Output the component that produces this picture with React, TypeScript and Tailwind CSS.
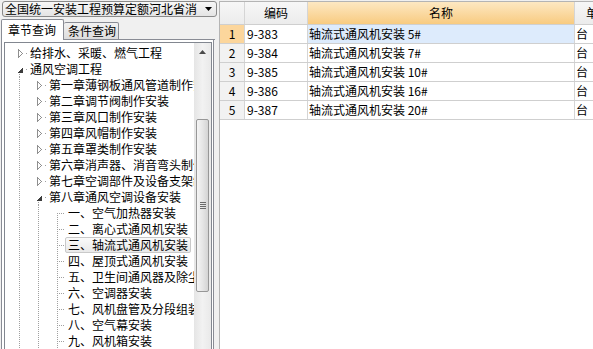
import React from "react";

type Node = { l: number; t: string; k: "c" | "e" | "leaf"; first?: boolean; hl?: boolean };

const tree: Node[] = [
  { l: 0, t: "给排水、采暖、燃气工程", k: "c" },
  { l: 0, t: "通风空调工程", k: "e" },
  { l: 1, t: "第一章薄钢板通风管道制作安装", k: "c" },
  { l: 1, t: "第二章调节阀制作安装", k: "c" },
  { l: 1, t: "第三章风口制作安装", k: "c" },
  { l: 1, t: "第四章风帽制作安装", k: "c" },
  { l: 1, t: "第五章罩类制作安装", k: "c" },
  { l: 1, t: "第六章消声器、消音弯头制作安装", k: "c" },
  { l: 1, t: "第七章空调部件及设备支架制作安装", k: "c" },
  { l: 1, t: "第八章通风空调设备安装", k: "e" },
  { l: 2, t: "一、空气加热器安装", k: "leaf", first: true },
  { l: 2, t: "二、离心式通风机安装", k: "leaf" },
  { l: 2, t: "三、轴流式通风机安装", k: "leaf", hl: true },
  { l: 2, t: "四、屋顶式通风机安装", k: "leaf" },
  { l: 2, t: "五、卫生间通风器及除尘器安装", k: "leaf" },
  { l: 2, t: "六、空调器安装", k: "leaf" },
  { l: 2, t: "七、风机盘管及分段组装式空调器安装", k: "leaf" },
  { l: 2, t: "八、空气幕安装", k: "leaf" },
  { l: 2, t: "九、风机箱安装", k: "leaf" },
];

const rows = [
  { n: "1", code: "9-383", name: "轴流式通风机安装 5#", unit: "台", sel: true },
  { n: "2", code: "9-384", name: "轴流式通风机安装 7#", unit: "台" },
  { n: "3", code: "9-385", name: "轴流式通风机安装 10#", unit: "台" },
  { n: "4", code: "9-386", name: "轴流式通风机安装 16#", unit: "台" },
  { n: "5", code: "9-387", name: "轴流式通风机安装 20#", unit: "台" },
];

const DOT = "#a0a0a0";

function Gutter({ node, idx }: { node: Node; idx: number }) {
  const L = node.l;
  const w = 22 + 19 * L;
  const lines: React.ReactNode[] = [];
  // ancestor column lines
  if (L >= 1 && idx >= 2) {
    lines.push(<line key="a0" x1={14.5} y1={0} x2={14.5} y2={16} stroke={DOT} strokeDasharray="1 1" />);
  }
  if (L >= 2 && idx >= 10) {
    lines.push(<line key="a1" x1={33.5} y1={0} x2={33.5} y2={16} stroke={DOT} strokeDasharray="1 1" />);
  }
  const cx = 14.5 + 19 * L;
  let own: React.ReactNode = null;
  if (node.k === "c") {
    const x0 = 13.5 + 19 * L;
    own = (
      <>
        <polygon points={`${x0},4.5 ${x0},12.5 ${x0 + 4},8.5`} fill="#ffffff" stroke="#8f8f8f" strokeWidth={1} />
        <rect x={21 + 19 * L} y={8} width={1} height={1} fill={DOT} />
      </>
    );
  } else if (node.k === "e") {
    own = (
      <>
        <polygon points={`${12 + 19 * L},12 ${18 + 19 * L},12 ${18 + 19 * L},6`} fill="#3c3c3c" />
        <line x1={cx} y1={13} x2={cx} y2={16} stroke={DOT} strokeDasharray="1 1" />
        <rect x={21 + 19 * L} y={8} width={1} height={1} fill={DOT} />
      </>
    );
  } else {
    own = (
      <>
        <line x1={cx} y1={node.first ? 8 : 0} x2={cx} y2={16} stroke={DOT} strokeDasharray="1 1" />
        <line x1={cx + 1} y1={8.5} x2={22 + 19 * L} y2={8.5} stroke={DOT} strokeDasharray="1 1" />
      </>
    );
  }
  return (
    <svg width={w} height={16} className="shrink-0" shapeRendering="crispEdges">
      {lines}
      {own}
    </svg>
  );
}

export default function App() {
  return (
    <div className="flex h-[349px] w-[593px] overflow-hidden bg-[#f0f0f0] font-['Noto_Sans_CJK_SC','Noto_Sans',sans-serif] text-[12px] text-black">
      {/* left panel */}
      <div className="flex w-[217px] shrink-0 flex-col">
        {/* combo */}
        <div className="ml-[2px] mt-[1px] flex h-[21px] w-[215px] items-center rounded-[3px] border border-[#8a8a8a] bg-gradient-to-b from-[#f7f7f7] to-[#e4e4e4] pl-[2px]">
          <span className="flex-1 whitespace-nowrap leading-[14px]">全国统一安装工程预算定额河北省消</span>
          <svg width="8" height="5" className="mr-[3px]">
            <polygon points="0,0 7,0 3.5,4" fill="#000" />
          </svg>
        </div>
        {/* tabs */}
        <div className="mt-[2px] flex h-[21px] items-end pl-[1px]">
          <div className="flex h-[21px] w-[63px] items-center rounded-t-[2px] border border-b-0 border-[#898c95] bg-white pl-[6px] leading-[14px]">
            章节查询
          </div>
          <div className="flex h-[18px] w-[55px] items-center rounded-t-[2px] border border-l-0 border-[#898c95] bg-gradient-to-b from-[#f2f2f2] to-[#dcdcdc] pl-[4px] leading-[14px]">
            条件查询
          </div>
          <div className="h-[1px] w-[96px] bg-[#898c95]" />
        </div>
        {/* tab panel */}
        <div className="ml-[1px] flex w-[213px] flex-1 flex-col border-x border-[#898c95] bg-white pl-[2px] pr-[1px] pt-[2px]">
          <div className="flex flex-1 border border-[#828790] bg-white">
            <div className="flex-1 overflow-hidden pt-[2px]">
              {tree.map((n, i) => (
                <div key={i} className="flex h-[16px] items-center whitespace-nowrap">
                  <Gutter node={n} idx={i} />
                  <span
                    className={
                      n.hl
                        ? "h-[16px] rounded-[2px] border border-[#c9c9c9] bg-gradient-to-b from-[#fafafa] to-[#e9e9e9] px-[2px] leading-[14px]"
                        : "h-[16px] border border-transparent px-[2px] leading-[14px]"
                    }
                  >
                    {n.t}
                  </span>
                </div>
              ))}
            </div>
            {/* scrollbar */}
            <div className="flex w-[17px] shrink-0 flex-col bg-gradient-to-r from-[#e5e5e5] via-[#f2f2f2] to-[#e9e9e9]">
              <div className="flex h-[17px] shrink-0 items-center justify-center">
                <svg width="7" height="4">
                  <polygon points="0,4 7,4 3.5,0" fill="#4a4a4a" />
                </svg>
              </div>
              <div className="h-[59px] shrink-0" />
              <div className="ml-[2px] flex h-[173px] w-[13px] shrink-0 flex-col items-center justify-center gap-[1px] rounded-[2px] border border-[#979797] bg-gradient-to-r from-[#f5f5f5] via-[#e6e6e6] to-[#d4d4d4]">
                <div className="h-[1px] w-[6px] bg-[#6a6a6a]" />
                <div className="h-[1px] w-[6px] bg-[#6a6a6a]" />
                <div className="h-[1px] w-[6px] bg-[#6a6a6a]" />
                <div className="h-[1px] w-[6px] bg-[#6a6a6a]" />
              </div>
            </div>
          </div>
        </div>
      </div>

      {/* grid */}
      <div className="ml-[2px] mt-[1px] flex flex-1 flex-col overflow-hidden border-l border-t border-[#b4b4b4] bg-white">
        <div className="flex h-[23px] shrink-0 border-b border-[#cfcfcf] bg-gradient-to-b from-[#f7f7f7] to-[#ececec]">
          <div className="w-[25px] shrink-0 border-r border-[#d5d5d5]" />
          <div className="flex w-[63px] shrink-0 items-center justify-center border-r border-[#d5d5d5]">编码</div>
          <div className="flex w-[267px] shrink-0 items-center justify-center border-r border-[#d5d5d5] bg-gradient-to-b from-[#fde8c2] to-[#f8cb80]">
            名称
          </div>
          <div className="flex w-[46px] shrink-0 items-center justify-center whitespace-nowrap">单位</div>
        </div>
        {rows.map((r) => (
          <div key={r.n} className="flex h-[19px] shrink-0 border-b border-[#cfcfcf]">
            <div
              className={
                r.sel
                  ? "flex w-[25px] shrink-0 items-center justify-center border-r border-[#d5d5d5] bg-[#fcd69c]"
                  : "flex w-[25px] shrink-0 items-center justify-center border-r border-[#d5d5d5] bg-[#f2f2f2]"
              }
            >
              {r.n}
            </div>
            <div className="flex w-[63px] shrink-0 items-center border-r border-[#d5d5d5] pl-[2px]">{r.code}</div>
            <div
              className={
                r.sel
                  ? "flex w-[267px] shrink-0 items-center whitespace-pre border-r border-[#d5d5d5] bg-[#ddebfc] pl-[1px]"
                  : "flex w-[267px] shrink-0 items-center whitespace-pre border-r border-[#d5d5d5] pl-[1px]"
              }
            >
              {r.name}
            </div>
            <div className="flex w-[46px] shrink-0 items-center pl-[1px]">{r.unit}</div>
          </div>
        ))}
      </div>
    </div>
  );
}
